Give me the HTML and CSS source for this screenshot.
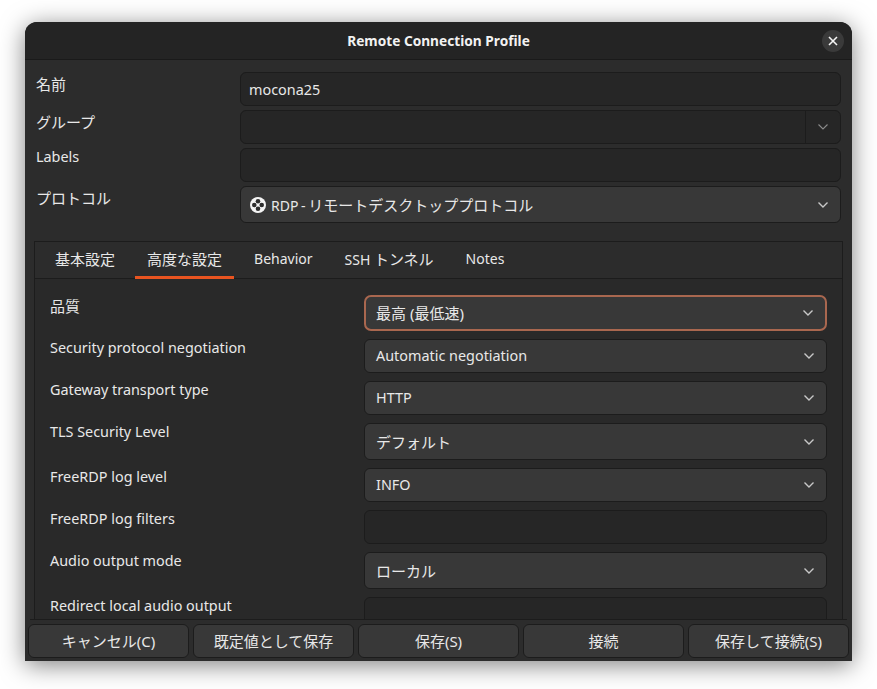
FILE: index.html
```html
<!DOCTYPE html>
<html lang="ja">
<head>
    <meta charset="UTF-8">
    <title>Remote Connection Profile</title>
    <link rel="stylesheet" href="styles.css">
</head>
<body>

<div class="window">
    <header class="titlebar">
        <h1>Remote Connection Profile</h1>
        <button class="close" type="button" aria-label="Close">
            <svg width="10" height="10" viewBox="0 0 10 10"><path d="M1 1l8 8M9 1l-8 8"/></svg>
        </button>
    </header>

    <div class="profile">
        <div class="profile-row row-name">
            <label>名前</label>
            <div class="entry lat">mocona25</div>
        </div>
        <div class="profile-row row-group">
            <label>グループ</label>
            <div class="entry entry-combo">
                <span class="entry-text"></span>
                <span class="entry-arrow">
                    <svg class="chevron chevron-dim" width="10" height="6" viewBox="0 0 10 6"><path d="M.5.5L5 5l4.500-4.500"/></svg>
                </span>
            </div>
        </div>
        <div class="profile-row row-labels">
            <label class="lat">Labels</label>
            <div class="entry"></div>
        </div>
        <div class="profile-row row-protocol">
            <label>プロトコル</label>
            <div class="combo">
                <span class="combo-value">
                    <svg class="rdp-icon" width="16" height="16" viewBox="0 0 16 16">
                        <circle cx="8" cy="8" r="8" fill="#f4f4f4"/>
                        <circle cx="8" cy="4.300" r="2.300" fill="#2c2c2c"/>
                        <circle cx="8" cy="11.700" r="2.300" fill="#2c2c2c"/>
                        <circle cx="4.300" cy="8" r="2.300" fill="#2c2c2c"/>
                        <circle cx="11.700" cy="8" r="2.300" fill="#2c2c2c"/>
                    </svg>
                    <span><span class="lat rdp-prefix">RDP - </span>リモートデスクトッププロトコル</span>
                </span>
                <svg class="chevron" width="10" height="6" viewBox="0 0 10 6"><path d="M.5.5L5 5l4.500-4.500"/></svg>
            </div>
        </div>
    </div>

    <div class="notebook">
        <div class="tabs">
            <div class="tab">基本設定</div>
            <div class="tab tab-active">高度な設定</div>
            <div class="tab lat">Behavior</div>
            <div class="tab"><span><span class="lat">SSH </span>トンネル</span></div>
            <div class="tab lat">Notes</div>
        </div>
        <div class="tab-page">
            <div class="setting">
                <label>品質</label>
                <div class="combo combo-focus">
                    <span class="combo-value">最高 (最低速)</span>
                    <svg class="chevron" width="10" height="6" viewBox="0 0 10 6"><path d="M.5.5L5 5l4.500-4.500"/></svg>
                </div>
            </div>
            <div class="setting">
                <label class="lat">Security protocol negotiation</label>
                <div class="combo">
                    <span class="combo-value lat">Automatic negotiation</span>
                    <svg class="chevron" width="10" height="6" viewBox="0 0 10 6"><path d="M.5.5L5 5l4.500-4.500"/></svg>
                </div>
            </div>
            <div class="setting">
                <label class="lat">Gateway transport type</label>
                <div class="combo">
                    <span class="combo-value lat">HTTP</span>
                    <svg class="chevron" width="10" height="6" viewBox="0 0 10 6"><path d="M.5.5L5 5l4.500-4.500"/></svg>
                </div>
            </div>
            <div class="setting">
                <label class="lat">TLS Security Level</label>
                <div class="combo combo-tall">
                    <span class="combo-value">デフォルト</span>
                    <svg class="chevron" width="10" height="6" viewBox="0 0 10 6"><path d="M.5.5L5 5l4.500-4.500"/></svg>
                </div>
            </div>
            <div class="setting">
                <label class="lat">FreeRDP log level</label>
                <div class="combo">
                    <span class="combo-value lat">INFO</span>
                    <svg class="chevron" width="10" height="6" viewBox="0 0 10 6"><path d="M.5.5L5 5l4.500-4.500"/></svg>
                </div>
            </div>
            <div class="setting">
                <label class="lat">FreeRDP log filters</label>
                <div class="entry"></div>
            </div>
            <div class="setting">
                <label class="lat">Audio output mode</label>
                <div class="combo combo-tall">
                    <span class="combo-value">ローカル</span>
                    <svg class="chevron" width="10" height="6" viewBox="0 0 10 6"><path d="M.5.5L5 5l4.500-4.500"/></svg>
                </div>
            </div>
            <div class="setting">
                <label class="lat">Redirect local audio output</label>
                <div class="entry"></div>
            </div>
        </div>
    </div>

    <div class="separator"></div>

    <div class="actions">
        <button type="button">キャンセル(C)</button>
        <button type="button">既定値として保存</button>
        <button type="button">保存(S)</button>
        <button type="button">接続</button>
        <button type="button">保存して接続(S)</button>
    </div>
</div>

</body>
</html>
```

FILE: styles.css
```css
* {
    box-sizing: border-box;
}
body {
    margin: 0;
    min-height: 100vh;
    padding: 22px 25px 0;
    background-color: #fff;
    color: #e8e8e8;
    font-family: 'Noto Sans', 'Noto Sans CJK JP', sans-serif;
    font-size: 15px;
}
label {
    display: block;
}
/* latin text runs a little smaller than the japanese */
.lat {
    font-size: 14.4px;
}
.window {
    width: 827px;
    height: 639px;
    display: flex;
    flex-direction: column;
    background-color: #2c2c2c;
    border-radius: 12px 12px 0 0;
    box-shadow: 0 4px 24px rgba(0, 0, 0, 0.5);
    overflow: hidden;
}
.titlebar {
    height: 38px;
    flex: none;
    display: flex;
    align-items: center;
    justify-content: center;
    position: relative;
    background-color: #242424;
    border-bottom: 1px solid #1a1a1a;
}
.titlebar h1 {
    margin: 0;
    font-size: 13.7px;
    font-weight: 700;
    color: #f2f2f2;
}
.close {
    position: absolute;
    top: 8px;
    right: 8px;
    width: 22px;
    height: 22px;
    padding: 0;
    display: flex;
    align-items: center;
    justify-content: center;
    border: none;
    border-radius: 50%;
    background-color: #3a3a3a;
}
.close path {
    stroke: #f5f5f5;
    stroke-width: 1.6;
    fill: none;
}
.profile {
    flex: none;
    padding: 12px 11px 0;
}
.profile-row {
    display: grid;
    grid-template-columns: 204px 601px;
    margin-bottom: 4px;
}
.profile-row label {
    line-height: 20px;
}
.row-name label {
    padding-top: 2px;
}
.row-group label {
    padding-top: 2px;
}
.row-labels label {
    margin-top: -1px;
}
.row-protocol label {
    padding-top: 2px;
}
.row-protocol .combo {
    height: 37px;
    padding-left: 9px;
}
.rdp-prefix {
    font-size: 14px;
    word-spacing: -1px;
}
.entry {
    height: 34px;
    padding: 0 8px;
    display: flex;
    align-items: center;
    background-color: #262626;
    border: 1px solid #1c1c1c;
    border-radius: 6px;
}
.entry-combo {
    padding: 0;
}
.entry-text {
    flex: 1;
}
.entry-arrow {
    width: 35px;
    height: 100%;
    display: flex;
    align-items: center;
    justify-content: center;
    border-left: 1px solid #1c1c1c;
}
.combo {
    height: 34px;
    padding: 0 12px 0 11px;
    display: flex;
    align-items: center;
    justify-content: space-between;
    background-color: #383838;
    border: 1px solid #1c1c1c;
    border-radius: 6px;
}
.combo-value {
    display: flex;
    align-items: center;
    gap: 5px;
}
.combo-value.lat {
    padding-bottom: 2px;
}
.combo-tall {
    height: 37px;
}
.combo-focus {
    height: 36px;
    padding-left: 10px;
    border: 2px solid #a9674f;
    border-radius: 7px;
}
.combo-focus .combo-value {
    padding-bottom: 2px;
}
.chevron path {
    stroke: #c8c8c8;
    stroke-width: 1.4;
    fill: none;
}
.chevron-dim path {
    stroke: #8a8a8a;
    stroke-width: 1.1;
}
.notebook {
    flex: 1;
    min-height: 0;
    margin: 14px 9px 0;
    display: flex;
    flex-direction: column;
    border: 1px solid #1c1c1c;
    border-bottom: none;
}
.tabs {
    flex: none;
    height: 37px;
    padding-left: 8px;
    display: flex;
    gap: 8px;
    border-bottom: 1px solid #1c1c1c;
}
.tab {
    padding: 0 12px 3px;
    display: flex;
    align-items: center;
    color: #e8e8e8;
}
.tab.lat,
.tab .lat {
    font-size: 14px;
}
.tab-active {
    margin-bottom: -1px;
    padding-bottom: 1px;
    border-bottom: 3px solid #e95420;
}
.tab-page {
    flex: 1;
    min-height: 0;
    padding: 16px 15px 0;
    overflow: hidden;
    background-color: #292929;
}
.setting {
    display: grid;
    grid-template-columns: 314px 463px;
    margin-bottom: 8px;
}
.setting label {
    padding-top: 1px;
    line-height: 20px;
}
.setting label.lat {
    padding-top: 0;
    margin-top: -1px;
}
.separator {
    flex: none;
    height: 1px;
    margin: 0 5px;
    background-color: #1c1c1c;
}
.actions {
    flex: none;
    height: 41px;
    padding: 4px 3px 0;
    display: flex;
    gap: 4px;
}
.actions button {
    flex: 1;
    height: 34px;
    padding: 0 0 2px;
    background-color: #383838;
    border: 1px solid #1c1c1c;
    border-radius: 6px;
    color: #e8e8e8;
    font: inherit;
}
```
